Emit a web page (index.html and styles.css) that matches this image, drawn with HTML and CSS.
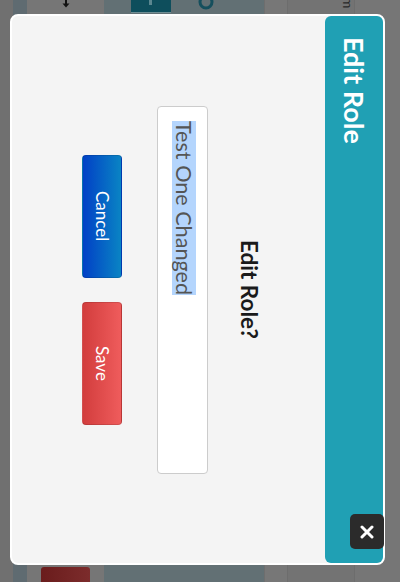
FILE: index.html
```html
<!DOCTYPE html>
<html lang="en">
<head>
<meta charset="utf-8">
<title>Edit Role</title>
<link rel="stylesheet" href="styles.css">
</head>
<body>
<div class="page">
  <div class="col c1"></div>
  <div class="col c2"></div>
  <div class="col c3">
    <svg class="arrow" width="10" height="8" viewBox="0 0 10 8"><path d="M5 0V4" stroke="#111" stroke-width="2"/><path d="M1.5 3.5H8.5L5 7.5Z" fill="#111"/></svg>
    <div class="redbtn"></div>
  </div>
  <div class="col c4">
    <div class="toprow">
      <div class="tealbox"><span class="tealmark"></span></div>
      <svg class="ring" width="18" height="12" viewBox="0 0 18 12"><circle cx="9" cy="2" r="6" fill="none" stroke="#154f5d" stroke-width="3"/></svg>
    </div>
  </div>
  <div class="col c5"></div>
  <div class="col c6"><span class="glyph">m</span></div>
  <div class="col c7"></div>
</div>

<div class="modal">
  <div class="header">
    <h2 class="title">Edit Role</h2>
  </div>
  <div class="body">
    <p class="question">Edit Role?</p>
    <div class="field"><span class="sel">Test One Changed</span></div>
    <div class="actions">
      <button class="btn cancel">Cancel</button>
      <button class="btn save">Save</button>
    </div>
  </div>
  <button class="close" aria-label="Close">
    <svg width="14" height="14" viewBox="0 0 14 14"><path d="M2 2L12 12M12 2L2 12" stroke="#fff" stroke-width="3" stroke-linecap="round"/></svg>
  </button>
</div>
</body>
</html>
```

FILE: styles.css
```css
html, body {
  margin: 0;
  padding: 0;
}
body {
  width: 400px;
  height: 582px;
  overflow: hidden;
  background: #747474;
  font-family: Lato, "Liberation Sans", sans-serif;
}

/* dimmed page behind the modal */
.page {
  display: flex;
  height: 582px;
}
.col {
  height: 100%;
  display: flex;
  flex-direction: column;
  justify-content: space-between;
}
.c1 { width: 13px; background: #707070; }
.c2 { width: 14px; background: #5f6b71; }
.c3 { width: 77px; background: #767676; align-items: center; }
.c4 { width: 161px; background: #627074; border-right: 1px solid #6e6e6e; box-sizing: border-box; }
.c5 { width: 22px; background: #777777; }
.c6 { width: 68px; background: #737373; border-left: 1px solid #6d6d6d; border-right: 1px solid #6d6d6d; box-sizing: border-box; }
.c7 { width: 45px; background: #767676; }

.arrow { display: block; }
.redbtn {
  width: 49px;
  height: 15px;
  border-radius: 3px 3px 0 0;
  background: linear-gradient(to right, #6a1c1c, #7c2c2c);
}
.toprow {
  display: flex;
  align-items: flex-start;
  gap: 20px;
  padding-left: 27px;
}
.tealbox {
  width: 40px;
  height: 12px;
  background: #0e4e5c;
  border-bottom: 1px solid #6f8e94;
  position: relative;
}
.tealmark {
  position: absolute;
  left: 18px;
  top: 0;
  width: 3px;
  height: 5px;
  background: #5b8790;
}
.ring { display: block; margin-left: 6px; }
.glyph {
  writing-mode: vertical-rl;
  font-size: 14px;
  line-height: 12px;
  color: #2a2a2a;
  margin-left: 24px;
  margin-top: -3px;
}

/* modal (content runs rotated, top to bottom) */
.modal {
  position: absolute;
  left: 10px;
  top: 14px;
  width: 375px;
  height: 551px;
  box-sizing: border-box;
  border: 2px solid #ffffff;
  border-radius: 8px;
  background: #f4f4f4;
  writing-mode: vertical-rl;
  display: flex;
  flex-direction: column;
}
.header {
  width: 58px;
  flex: none;
  background: #20a0b4;
  border-radius: 6px;
}
.title {
  margin: 0;
  padding-top: 21px;
  font-size: 27px;
  font-weight: 700;
  line-height: 58px;
  color: #ffffff;
}
.body {
  flex: 1;
  display: flex;
  flex-direction: column;
  align-items: center;
  padding-right: 61px;
}
.question {
  margin: 0;
  font-size: 22.5px;
  font-weight: 700;
  line-height: 30px;
  color: #1a1a1a;
}
.field {
  margin-right: 26px;
  width: 51px;
  height: 368px;
  box-sizing: border-box;
  border: 1px solid #cccccc;
  border-radius: 4px;
  background: #ffffff;
  padding-top: 14px;
  padding-right: 11px;
  font-size: 21.6px;
  color: #555555;
  line-height: 24px;
}
.sel {
  display: inline-block;
  line-height: 24px;
  background: #b4d5fd;
}
.actions {
  margin-right: 35px;
  display: flex;
  gap: 24px;
}
.btn {
  width: 40px;
  height: 123px;
  box-sizing: border-box;
  border: 1px solid rgba(0, 0, 0, 0.12);
  border-radius: 4px;
  padding: 0;
  font-family: inherit;
  font-size: 17px;
  line-height: 38px;
  color: #ffffff;
  text-align: center;
}
.cancel { background: linear-gradient(to right, #0140c6, #0a84c4); }
.save { background: linear-gradient(to right, #d23d3d, #ef5c5c); }

.close {
  position: absolute;
  right: -1px;
  bottom: 14px;
  width: 34px;
  height: 35px;
  padding: 0;
  border: none;
  border-radius: 5px;
  background: #2b2b2b;
  display: flex;
  align-items: center;
  justify-content: center;
}
.close svg { display: block; }
```
